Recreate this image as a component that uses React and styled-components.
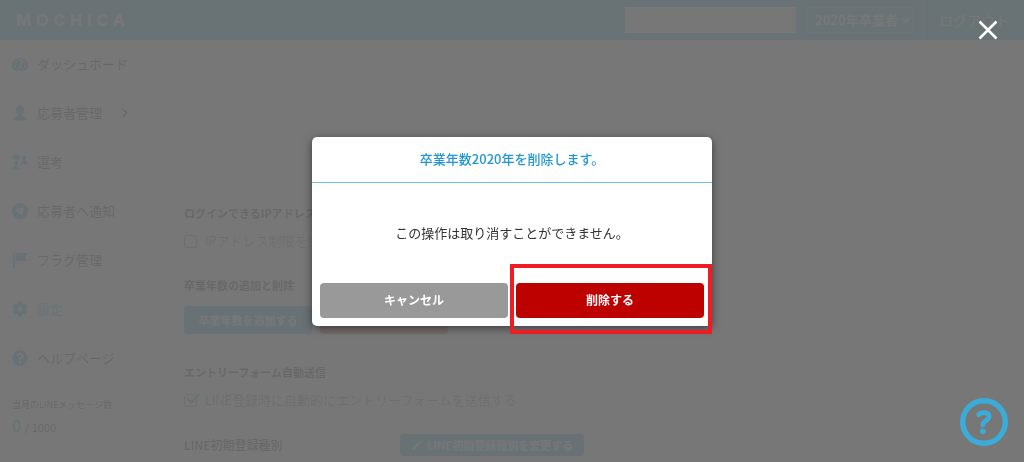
import React from 'react'
import styled, { createGlobalStyle } from 'styled-components'
import { FaTachometerAlt, FaTelegramPlane, FaCog, FaQuestionCircle } from 'react-icons/fa'
import { FiChevronRight } from 'react-icons/fi'
import { MdEdit } from 'react-icons/md'

const GlobalStyle = createGlobalStyle`
* {
  box-sizing: border-box;
}
body {
  margin: 0;
  background: #fff;
  color: #333;
  font-family: "Noto Sans CJK JP", sans-serif;
  font-size: 13px;
  line-height: 20px;
}
button, input, select {
  font: inherit;
}
`

const Page = styled.div`
height: 100vh;
display: flex;
flex-direction: column;
overflow: hidden;
`

const Header = styled.header`
flex: none;
height: 40px;
padding-left: 16px;
display: flex;
align-items: center;
background: #3cbeeb;
color: #fff;
`
const Logo = styled.a`
margin-right: auto;
color: #fff;
font-family: "Inter", sans-serif;
font-size: 16px;
font-weight: 700;
letter-spacing: 5px;
text-decoration: none;
`
const Search = styled.input`
width: 171px;
height: 26px;
padding: 0 8px;
border: 0;
background: #fff;
`
const YearBox = styled.div`
position: relative;
margin: 0 8px 0 10px;
svg {
  position: absolute;
  right: 4px;
  top: 9px;
  pointer-events: none;
}
`
const YearSelect = styled.select`
display: block;
width: 108px;
height: 26px;
padding: 0 8px;
appearance: none;
border: 1px solid #8fdcf5;
border-radius: 3px;
background: transparent;
color: #fff;
font-weight: 700;
line-height: 20px;
`
const Logout = styled.a`
height: 40px;
padding: 0 15px 0 16px;
border-left: 1px solid #8fdcf5;
color: #fff;
font-size: 14px;
line-height: 40px;
text-decoration: none;
`

const Body = styled.div`
flex: 1;
min-height: 0;
display: flex;
`
const Sidebar = styled.aside`
flex: none;
width: 144px;
`
const NavLink = styled.a`
height: 49px;
padding: 0 12px;
display: flex;
align-items: center;
gap: 9px;
border-bottom: 1px solid #f3f3f3;
color: ${props => (props.$active ? '#3cbeeb' : '#333')};
text-decoration: none;
white-space: nowrap;

& > svg:first-child {
  flex: none;
  color: #2aa9e0;
}
& > svg:last-child {
  margin-left: auto;
}
`
const Usage = styled.div`
padding: 12px;
`
const UsageTitle = styled.div`
font-size: 9px;
`
const UsageCount = styled.div`
display: flex;
align-items: baseline;
gap: 4px;
font-size: 11px;
strong {
  color: #2aa9e0;
  font-size: 16px;
  font-weight: 400;
}
`

const Main = styled.main`
flex: 1;
padding: 163px 24px 0;
border-left: 16px solid #f6f6f6;
`
const Section = styled.section`
margin-bottom: ${props => props.$gap}px;
`
const Heading = styled.h2`
margin: 0 0 8px;
font-size: 11px;
font-weight: 700;
line-height: 20px;
`
const CheckLabel = styled.label`
display: flex;
align-items: center;
gap: 8px;
color: #555;
font-weight: 300;
`
const CheckWrap = styled.span`
position: relative;
display: flex;
svg {
  position: absolute;
  left: 2px;
  top: -2px;
}
`
const Checkbox = styled.input`
width: 13px;
height: 13px;
margin: 0;
appearance: none;
border: 1px solid #888;
border-radius: 3px;
`
const Actions = styled.div`
padding-top: 3px;
display: flex;
gap: 8px;
`
const SmallButton = styled.button`
min-width: ${props => props.$width}px;
height: ${props => props.$height}px;
padding: 0 8px;
display: flex;
align-items: center;
justify-content: center;
gap: 4px;
border: 0;
border-radius: 3px;
background: ${props => (props.$danger ? '#d0443c' : '#2fb4e0')};
color: #fff;
font-size: 11px;
font-weight: 700;
line-height: 20px;
white-space: nowrap;
`
const TypeRow = styled.div`
display: grid;
grid-template-columns: 216px auto;
justify-content: start;
align-items: center;
font-size: 12px;
font-weight: 500;
`

const Overlay = styled.div`
position: fixed;
inset: 0;
display: flex;
align-items: center;
justify-content: center;
background: rgba(109, 109, 109, 0.93);
`
const Dialog = styled.div`
width: 400px;
max-width: 100%;
border-radius: 5px;
background: #fff;
box-shadow: 0 2px 8px rgba(0, 0, 0, 0.5);
text-align: center;
`
const DialogTitle = styled.h1`
margin: 0;
padding: 12px 8px 13px;
border-bottom: 1px solid #6fc1ea;
color: #2196d6;
font-size: 13px;
font-weight: 500;
line-height: 20px;
`
const DialogText = styled.p`
margin: 0;
padding: 40px 8px;
`
const DialogFooter = styled.div`
padding: 0 8px 8px;
display: grid;
grid-template-columns: 1fr 1fr;
gap: 8px;
`
const DialogButton = styled.button`
width: 100%;
height: 35px;
padding: 0;
border: 0;
border-radius: 4px;
background: ${props => (props.$danger ? '#bd0000' : '#999')};
color: #fff;
font-size: 12px;
font-weight: 700;
`
const Highlighted = styled.div`
position: relative;

&::after {
  content: '';
  position: absolute;
  inset: -19px -8px -16px -6px;
  border: 4px solid #ee1c25;
  pointer-events: none;
}
`
const CloseButton = styled.button`
position: fixed;
top: 20px;
right: 26px;
padding: 0;
display: flex;
border: 0;
background: none;
`
const HelpButton = styled.button`
position: fixed;
right: 16px;
bottom: 16px;
padding: 0;
display: flex;
border: 0;
background: none;
`

const UserIcon = () => (
  <svg width="16" height="16" viewBox="0 0 16 16" fill="currentColor">
    <path d="M8 0.5c2.500 0 4 1.700 4 4.200 0 2-.9 4-2.200 5v1.100c.8.7 4.700 1.100 4.700 4.700H1.500c0-3.600 3.900-4 4.700-4.700V9.700C4.900 8.700 4 6.700 4 4.700 4 2.200 5.500.5 8 .5z" />
  </svg>
)
const StepsIcon = () => (
  <svg width="16" height="16" viewBox="0 0 16 16" fill="currentColor">
    <ellipse cx="4" cy="3" rx="3.800" ry="2.700" />
    <circle cx="4" cy="9" r="2.300" />
    <path d="M3 10h2v2c1 .8 2.600 1 2.600 3.500H.4C.4 13 2 12.800 3 12z" />
    <circle cx="12" cy="3.500" r="2" />
    <path d="M11.200 4h1.600v2.500c1 .6 2.500 1 2.500 3.500H8.700c0-2.500 1.500-2.900 2.500-3.500z" />
  </svg>
)
const SendIcon = () => (
  <svg width="16" height="16" viewBox="0 0 16 16">
    <circle cx="8" cy="8" r="8" fill="currentColor" />
    <FaTelegramPlane x="2" y="3" size="10" color="#fff" />
  </svg>
)
const FlagIcon = () => (
  <svg width="16" height="16" viewBox="0 0 16 16" fill="currentColor">
    <path d="M.7.5h2v15.500h-2zM3.600 1h11.900l-2.800 4 2.800 4H3.600z" />
  </svg>
)

const navItems = [
  { name: 'ダッシュボード', icon: <FaTachometerAlt size={16} /> },
  { name: '応募者管理', icon: <UserIcon />, more: true },
  { name: '選考', icon: <StepsIcon /> },
  { name: '応募者へ通知', icon: <SendIcon /> },
  { name: 'フラグ管理', icon: <FlagIcon /> },
  { name: '設定', icon: <FaCog size={16} />, active: true },
  { name: 'ヘルプページ', icon: <FaQuestionCircle size={16} /> },
]

const Check = ({ label, checked }) => (
  <CheckLabel>
    <CheckWrap>
      <Checkbox type="checkbox" defaultChecked={checked} />
      {checked && (
        <svg width="15" height="13" viewBox="0 0 15 13" fill="none" stroke="#2aa9e0" strokeWidth="2.500">
          <path d="M1.500 6.500l4 3.800L13.500 1.800" />
        </svg>
      )}
    </CheckWrap>
    {label}
  </CheckLabel>
)

const App = () => {
  return (
    <>
      <GlobalStyle />
      <Page>
        <Header>
          <Logo href="#">MOCHICA</Logo>
          <Search type="text" aria-label="検索" />
          <YearBox>
            <YearSelect aria-label="卒業年">
              <option>2020年卒業者</option>
            </YearSelect>
            <svg width="8" height="8" viewBox="0 0 8 8" fill="none" stroke="#fff" strokeWidth="2">
              <path d="M1 2.500l3 3 3-3" />
            </svg>
          </YearBox>
          <Logout href="#">ログアウト</Logout>
        </Header>
        <Body>
          <Sidebar>
            <nav>
              {navItems.map(item => (
                <NavLink key={item.name} href="#" $active={item.active}>
                  {item.icon}
                  <span>{item.name}</span>
                  {item.more && <FiChevronRight size={14} />}
                </NavLink>
              ))}
            </nav>
            <Usage>
              <UsageTitle>当月のLINEメッセージ数</UsageTitle>
              <UsageCount><strong>0</strong> / 1000</UsageCount>
            </Usage>
          </Sidebar>
          <Main>
            <Section $gap={24}>
              <Heading>ログインできるIPアドレス</Heading>
              <Check label="IPアドレス制限をする" />
            </Section>
            <Section $gap={28}>
              <Heading>卒業年数の追加と削除</Heading>
              <Actions>
                <SmallButton $width={128} $height={28}>卒業年数を追加する</SmallButton>
                <SmallButton $width={128} $height={28} $danger aria-label="卒業年数を削除する" />
              </Actions>
            </Section>
            <Section $gap={24}>
              <Heading>エントリーフォーム自動送信</Heading>
              <Check label="LINE登録時に自動的にエントリーフォームを送信する" checked />
            </Section>
            <TypeRow>
              <span>LINE初期登録種別</span>
              <SmallButton $width={184} $height={22}>
                <MdEdit size={12} />
                LINE初期登録種別を変更する
              </SmallButton>
            </TypeRow>
          </Main>
        </Body>
      </Page>
      <Overlay>
        <Dialog role="dialog" aria-modal="true" aria-labelledby="dialog-title">
          <DialogTitle id="dialog-title">卒業年数2020年を削除します。</DialogTitle>
          <DialogText>この操作は取り消すことができません。</DialogText>
          <DialogFooter>
            <DialogButton>キャンセル</DialogButton>
            <Highlighted>
              <DialogButton $danger>削除する</DialogButton>
            </Highlighted>
          </DialogFooter>
        </Dialog>
        <CloseButton aria-label="閉じる">
          <svg width="20" height="20" viewBox="0 0 20 20" stroke="#fff" strokeWidth="2.500">
            <path d="M1.500 1.500l17 17M18.500 1.500l-17 17" />
          </svg>
        </CloseButton>
        <HelpButton aria-label="ヘルプ">
          <svg width="48" height="48" viewBox="0 0 48 48" fill="none" stroke="#3bacd9">
            <circle cx="24" cy="24" r="21.300" strokeWidth="5.400" />
            <path d="M18.700 16.500c3-3 10.300-2.500 10.300 2 0 4-6.300 4.500-6.300 8.500" strokeWidth="4.800" strokeLinecap="round" />
            <circle cx="22.800" cy="33.300" r="2.800" fill="#3bacd9" stroke="none" />
          </svg>
        </HelpButton>
      </Overlay>
    </>
  )
}

export default App
